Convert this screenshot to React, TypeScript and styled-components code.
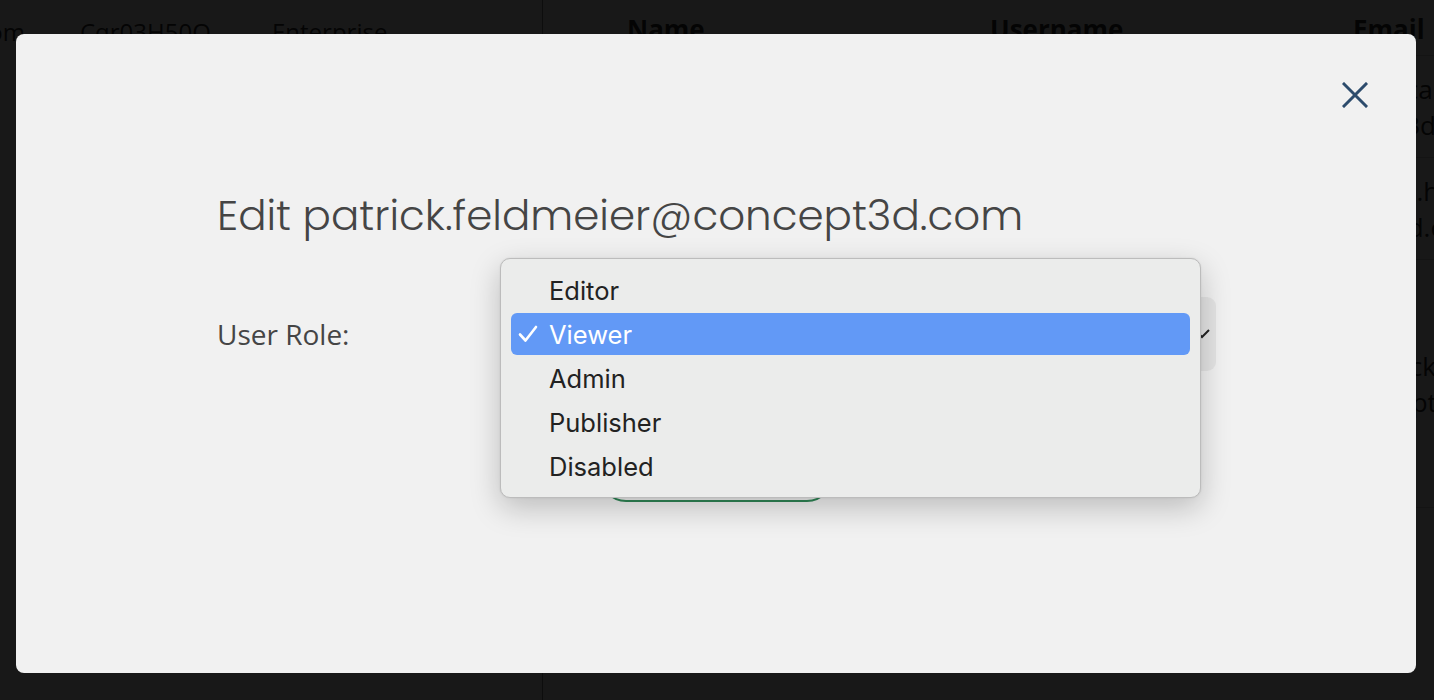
import React from 'react';
import styled, {createGlobalStyle} from 'styled-components';

const GlobalStyle = createGlobalStyle`
  html, body {
    margin: 0;
    padding: 0;
    background: #ffffff;
    overflow: hidden;
  }
  body {
    font-family: "Open Sans", "Noto Sans", sans-serif;
    color: #333;
  }
`;

const USERS = [
    {name: 'Jessica Carpenter', username: 'jcarpenter', email: 'jess.carpenter@concept3d.com'},
    {name: 'Brian Harmon', username: 'bharmon', email: 'brian.harmon@concept3d.com'},
    {name: 'Patrick Feldmeier', username: 'pfeldmeier', email: 'patrick.feldmeier@concept3d.com'},
];

const ROLES = ['Editor', 'Viewer', 'Admin', 'Publisher', 'Disabled'];

function App() {
    const [role] = React.useState<string>('Viewer');

    return (
        <>
            <GlobalStyle/>
            <Page>
                <LeftPanel>
                    <AccountRow>
                        <ClipCell>admin@concept3d.com</ClipCell>
                        <IdCell>Cqr03H50Q</IdCell>
                        <span>Enterprise</span>
                    </AccountRow>
                </LeftPanel>
                <RightPanel>
                    <UserGrid>
                        <HeadCell>Name</HeadCell>
                        <HeadCell>Username</HeadCell>
                        <HeadCell>Email</HeadCell>
                    </UserGrid>
                    {USERS.map((user, key) => (
                        <UserGrid key={key} $tall={key === 2}>
                            <BodyCell>{user.name}</BodyCell>
                            <BodyCell>{user.username}</BodyCell>
                            <EmailCell>{user.email}</EmailCell>
                        </UserGrid>
                    ))}
                </RightPanel>
            </Page>

            <Backdrop>
                <Modal>
                    <CloseButton aria-label="Close">
                        <svg width="26" height="26" viewBox="0 0 26 26" fill="none">
                            <path d="M2 2L24 24M24 2L2 24" stroke="#2c4b6c" strokeWidth="3" strokeLinecap="square"/>
                        </svg>
                    </CloseButton>

                    <Title>Edit patrick.feldmeier@concept3d.com</Title>

                    <FormRow>
                        <Label>User Role:</Label>
                        <SelectBox>
                            <Chevron width="18" height="12" viewBox="0 0 18 12" fill="none">
                                <path d="M2 2L9 9L16 2" stroke="#222" strokeWidth="2"/>
                            </Chevron>
                            <Popup>
                                {ROLES.map((r) => (
                                    <Option key={r} $active={r === role}>
                                        {r === role && (
                                            <Check width="20" height="18" viewBox="0 0 20 18" fill="none">
                                                <path d="M2 9.5L7.5 15.5L18 2" stroke="#fff" strokeWidth="2.6"
                                                      strokeLinecap="round" strokeLinejoin="round"/>
                                            </Check>
                                        )}
                                        {r}
                                    </Option>
                                ))}
                            </Popup>
                        </SelectBox>
                    </FormRow>

                    <ButtonRow>
                        <SaveButton>Save</SaveButton>
                    </ButtonRow>
                </Modal>
            </Backdrop>
        </>
    );
}

const Page = styled.div`
  display: flex;
  width: 1434px;
  height: 700px;
  overflow: hidden;
`;

const LeftPanel = styled.div`
  width: 542px;
  flex-shrink: 0;
  border-right: 1px solid #888;
  overflow: hidden;
`;

const AccountRow = styled.div`
  display: flex;
  align-items: center;
  height: 62px;
  font-size: 24px;
  white-space: nowrap;
`;

const ClipCell = styled.div`
  width: 25px;
  flex-shrink: 0;
  display: flex;
  justify-content: flex-end;
  overflow: hidden;
  margin-right: 55px;
`;

const IdCell = styled.span`
  width: 192px;
  flex-shrink: 0;
`;

const RightPanel = styled.div`
  flex: 1;
  padding-left: 84px;
  overflow: hidden;
`;

const UserGrid = styled.div<{ $tall?: boolean }>`
  display: grid;
  grid-template-columns: 363px 363px 320px;
  align-items: center;
  min-height: ${p => (p.$tall ? '247px' : '101px')};
  border-bottom: 1px solid #d6d6d6;
  &:first-child {
    min-height: 52px;
    align-items: start;
  }
`;

const HeadCell = styled.div`
  font-size: 26px;
  font-weight: 700;
  line-height: 52px;
  margin-top: 3px;
`;

const BodyCell = styled.div`
  font-size: 24px;
`;

const EmailCell = styled.div`
  font-size: 26px;
  line-height: 36px;
  width: 250px;
  word-break: break-all;
`;

const Backdrop = styled.div`
  position: fixed;
  inset: 0;
  background: rgba(0, 0, 0, 0.905);
  display: flex;
  align-items: flex-start;
  justify-content: flex-start;
  padding: 34px 0 0 16px;
`;

const Modal = styled.div`
  position: relative;
  width: 1400px;
  height: 639px;
  box-sizing: border-box;
  background: #f1f1f1;
  border-radius: 8px;
  padding: 154px 200px 0 201px;
`;

const CloseButton = styled.button`
  position: absolute;
  top: 48px;
  right: 48px;
  width: 26px;
  height: 26px;
  padding: 0;
  border: none;
  background: none;
  display: flex;
`;

const Title = styled.h2`
  margin: 0;
  font-family: "Poppins", "Lato", "Noto Sans", sans-serif;
  font-weight: 300;
  font-size: 42px;
  line-height: 56px;
  color: #454545;
  white-space: nowrap;
`;

const FormRow = styled.div`
  display: flex;
  align-items: center;
  margin-top: 53px;
`;

const Label = styled.label`
  width: 283px;
  flex-shrink: 0;
  font-size: 28px;
  color: #454545;
`;

const SelectBox = styled.div`
  position: relative;
  width: 716px;
  height: 74px;
  border-radius: 9px;
  background: #e4e4e4;
`;

const Chevron = styled.svg`
  position: absolute;
  right: 5px;
  top: 31px;
`;

const Popup = styled.div`
  position: absolute;
  left: 0;
  top: -39px;
  width: 701px;
  box-sizing: border-box;
  padding: 10px 10px 10px;
  display: flex;
  flex-direction: column;
  gap: 2px;
  background: #ebeceb;
  border: 1px solid #bcbcbc;
  border-radius: 10px;
  box-shadow: 0 10px 30px rgba(0, 0, 0, 0.22), 0 0 2px rgba(0, 0, 0, 0.1);
  font-family: "Inter", "Noto Sans", sans-serif;
`;

const Option = styled.div<{ $active?: boolean }>`
  position: relative;
  height: 42px;
  padding-left: 38px;
  display: flex;
  align-items: center;
  border-radius: 6px;
  font-size: 25.5px;
  color: ${p => (p.$active ? '#ffffff' : '#222222')};
  background: ${p => (p.$active ? '#6299f6' : 'transparent')};
`;

const Check = styled.svg`
  position: absolute;
  left: 7px;
  top: 12px;
`;

const ButtonRow = styled.div`
  display: flex;
  justify-content: center;
  margin-top: 77px;
`;

const SaveButton = styled.button`
  width: 235px;
  height: 54px;
  border: 2px solid #2f8656;
  border-radius: 28px;
  background: transparent;
  color: #2f8656;
  font-family: "Open Sans", sans-serif;
  font-size: 22px;
`;

export default App;
